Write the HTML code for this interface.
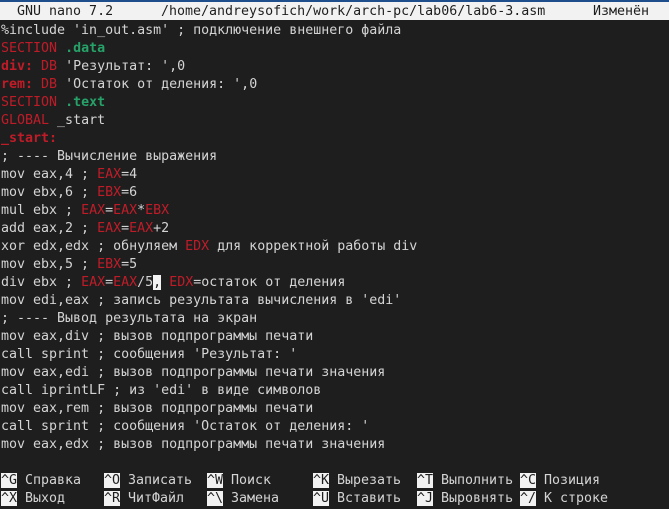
<!DOCTYPE html>
<html><head><meta charset="utf-8"><style>
html,body{margin:0;padding:0;}
body{width:669px;height:508px;background:#1e1e1e;overflow:hidden;position:relative;font-family:"DejaVu Sans Mono","Liberation Mono",monospace;font-size:13.3px;color:#d4d4d4;}
.top{position:absolute;left:0;top:0;width:669px;height:2px;background:#1f4e8c;}
.hdr{position:absolute;left:0;top:2px;width:669px;height:18px;background:#f2f2f2;color:#1e1e1e;}
.l{position:absolute;left:1px;height:18px;line-height:18px;white-space:pre;}
.r{color:#c01c28}.g{color:#26a269;font-weight:bold}.rb{color:#c01c28;font-weight:bold}
.k{background:#f2f2f2;color:#1e1e1e}
.cur{background:#f2f2f2;color:#1e1e1e}
.m{position:absolute;left:0;top:1px;width:669px;height:508px;}
</style></head><body>
<div class="top"></div>
<div class="hdr"><span class="l" style="left:1px;top:1px">  GNU nano 7.2</span><span class="l" style="left:161px;top:1px">/home/andreysofich/work/arch-pc/lab06/lab6-3.asm</span><span class="l" style="left:593px;top:1px">Изменён</span></div>
<div class="m">
<div class="l" style="top:21px">%include 'in_out.asm' ; подключение внешнего файла</div>
<div class="l" style="top:39px"><span class="r">SECTION</span> <span class="g">.data</span></div>
<div class="l" style="top:57px"><span class="rb">div:</span> <span class="r">DB</span> 'Результат: ',0</div>
<div class="l" style="top:75px"><span class="rb">rem:</span> <span class="r">DB</span> 'Остаток от деления: ',0</div>
<div class="l" style="top:93px"><span class="r">SECTION</span> <span class="g">.text</span></div>
<div class="l" style="top:111px"><span class="r">GLOBAL</span> _start</div>
<div class="l" style="top:129px"><span class="rb">_start:</span></div>
<div class="l" style="top:147px">; ---- Вычисление выражения</div>
<div class="l" style="top:165px">mov eax,4 ; <span class="r">EAX</span>=4</div>
<div class="l" style="top:183px">mov ebx,6 ; <span class="r">EBX</span>=6</div>
<div class="l" style="top:201px">mul ebx ; <span class="r">EAX</span>=<span class="r">EAX</span>*<span class="r">EBX</span></div>
<div class="l" style="top:219px">add eax,2 ; <span class="r">EAX</span>=<span class="r">EAX</span>+2</div>
<div class="l" style="top:237px">xor edx,edx ; обнуляем <span class="r">EDX</span> для корректной работы div</div>
<div class="l" style="top:255px">mov ebx,5 ; <span class="r">EBX</span>=5</div>
<div class="l" style="top:273px">div ebx ; <span class="r">EAX</span>=<span class="r">EAX</span>/5<span class="cur">,</span> <span class="r">EDX</span>=остаток от деления</div>
<div class="l" style="top:291px">mov edi,eax ; запись результата вычисления в 'edi'</div>
<div class="l" style="top:309px">; ---- Вывод результата на экран</div>
<div class="l" style="top:327px">mov eax,div ; вызов подпрограммы печати</div>
<div class="l" style="top:345px">call sprint ; сообщения 'Результат: '</div>
<div class="l" style="top:363px">mov eax,edi ; вызов подпрограммы печати значения</div>
<div class="l" style="top:381px">call iprintLF ; из 'edi' в виде символов</div>
<div class="l" style="top:399px">mov eax,rem ; вызов подпрограммы печати</div>
<div class="l" style="top:417px">call sprint ; сообщения 'Остаток от деления: '</div>
<div class="l" style="top:435px">mov eax,edx ; вызов подпрограммы печати значения</div>

<div class="l" style="top:471px;left:1px"><span class="k">^G</span> Справка</div>
<div class="l" style="top:471px;left:104px"><span class="k">^O</span> Записать</div>
<div class="l" style="top:471px;left:207px"><span class="k">^W</span> Поиск</div>
<div class="l" style="top:471px;left:313px"><span class="k">^K</span> Вырезать</div>
<div class="l" style="top:471px;left:417px"><span class="k">^T</span> Выполнить</div>
<div class="l" style="top:471px;left:520px"><span class="k">^C</span> Позиция</div>
<div class="l" style="top:489px;left:1px"><span class="k">^X</span> Выход</div>
<div class="l" style="top:489px;left:104px"><span class="k">^R</span> ЧитФайл</div>
<div class="l" style="top:489px;left:207px"><span class="k">^\</span> Замена</div>
<div class="l" style="top:489px;left:313px"><span class="k">^U</span> Вставить</div>
<div class="l" style="top:489px;left:417px"><span class="k">^J</span> Выровнять</div>
<div class="l" style="top:489px;left:520px"><span class="k">^/</span> К строке</div>
</div>
</body></html>
